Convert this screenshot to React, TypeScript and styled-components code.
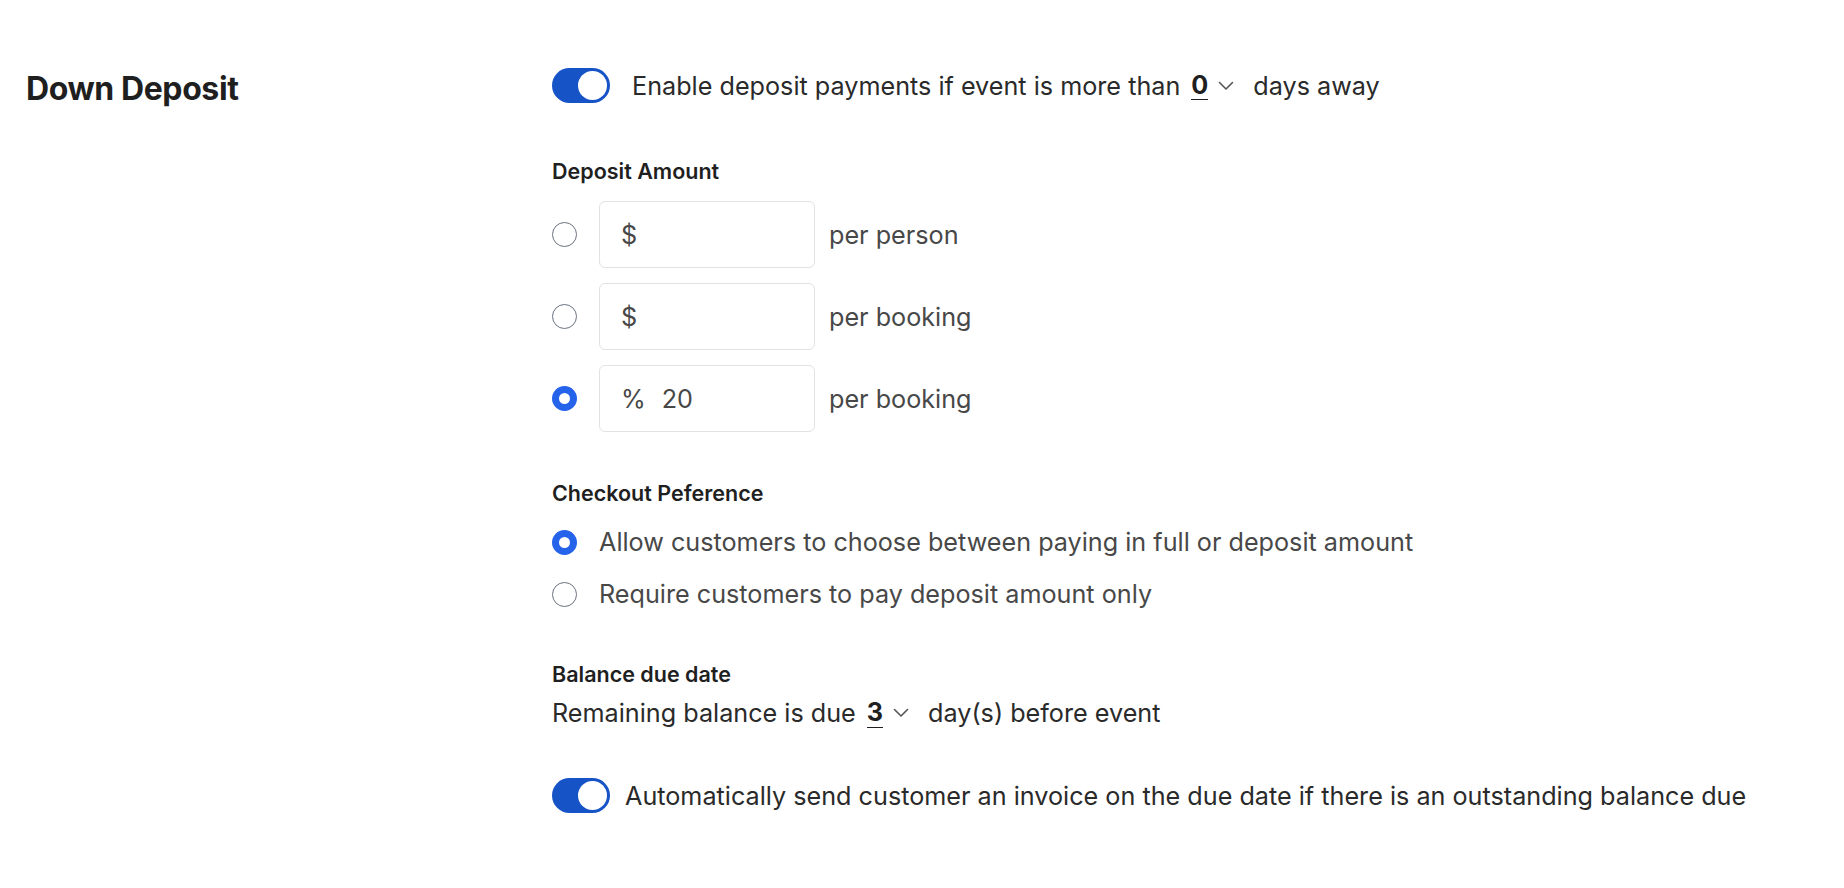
import React from 'react';
import styled, { createGlobalStyle } from 'styled-components';

const COLORS = {
  heading: '#1f1f1f',
  text: '#2a2a2a',
  muted: '#484848',
  toggle: '#1653c6',
  radio: '#2563eb',
  radioBorder: '#6b7280',
  inputBorder: '#e2e2e5',
};

const BODY_SIZE = 25.2;

const GlobalStyle = createGlobalStyle`
  html, body {
    margin: 0;
    padding: 0;
    background: #ffffff;
  }
  body {
    font-family: 'Inter', 'Noto Sans', sans-serif;
    color: ${COLORS.text};
    -webkit-font-smoothing: antialiased;
  }
`;

const Page = styled.div`
  display: grid;
  grid-template-columns: 526px 1fr;
  padding: 68px 0 0 26px;
`;

const SectionTitle = styled.h2`
  margin: 2px 0 0;
  font-size: 32px;
  line-height: 38px;
  font-weight: 700;
  letter-spacing: -0.4px;
  color: ${COLORS.heading};
`;

const Content = styled.div`
  display: flex;
  flex-direction: column;
`;

const ToggleRow = styled.div<{ $gap: number; $top?: number }>`
  display: flex;
  align-items: center;
  gap: ${(p) => p.$gap}px;
  margin-top: ${(p) => p.$top ?? 0}px;
  font-size: ${BODY_SIZE}px;
  color: ${COLORS.text};
`;

const ToggleTrack = styled.span`
  position: relative;
  display: inline-block;
  flex-shrink: 0;
  width: 58px;
  height: 35px;
  border-radius: 18px;
  background: ${COLORS.toggle};
`;

const ToggleKnob = styled.span`
  position: absolute;
  top: 3px;
  right: 3px;
  width: 29px;
  height: 29px;
  border-radius: 50%;
  background: #ffffff;
`;

const Sentence = styled.span`
  display: inline-flex;
  align-items: center;
`;

const InlineSelect = styled.span`
  display: inline-flex;
  align-items: center;
  gap: 10px;
  margin: 0 19px 0 11px;
`;

const SelectValue = styled.span`
  font-weight: 700;
  color: ${COLORS.heading};
  border-bottom: 1.5px solid ${COLORS.heading};
  line-height: 1.15;
`;

const FieldLabel = styled.div<{ $top: number }>`
  margin-top: ${(p) => p.$top}px;
  font-size: 21.5px;
  font-weight: 600;
  color: ${COLORS.heading};
`;

const AmountList = styled.div`
  display: flex;
  flex-direction: column;
  gap: 15px;
  margin-top: 17px;
`;

const AmountRow = styled.div`
  display: flex;
  align-items: center;
`;

const Radio = styled.span<{ $checked?: boolean }>`
  display: inline-block;
  flex-shrink: 0;
  box-sizing: border-box;
  width: 25px;
  height: 25px;
  border-radius: 50%;
  background: #ffffff;
  border: ${(p) => (p.$checked ? `7.5px solid ${COLORS.radio}` : `1.5px solid ${COLORS.radioBorder}`)};
`;

const AmountInput = styled.div`
  box-sizing: border-box;
  display: flex;
  align-items: center;
  gap: 16px;
  width: 216px;
  height: 67px;
  margin-left: 22px;
  padding: 0 21px;
  border: 1.5px solid ${COLORS.inputBorder};
  border-radius: 6px;
  font-size: ${BODY_SIZE}px;
  color: ${COLORS.muted};
`;

const Unit = styled.span`
  font-size: ${BODY_SIZE}px;
  color: ${COLORS.muted};
  margin-left: 14px;
`;

const OptionList = styled.div`
  display: flex;
  flex-direction: column;
  gap: 22px;
  margin-top: 21px;
`;

const OptionRow = styled.div`
  display: flex;
  align-items: center;
  gap: 22px;
  font-size: ${BODY_SIZE}px;
  color: ${COLORS.muted};
`;

const DueLine = styled.div`
  display: flex;
  align-items: center;
  margin-top: 11px;
  font-size: ${BODY_SIZE}px;
  color: ${COLORS.text};
`;

const Chevron = () => (
  <svg width="16" height="10" viewBox="0 0 16 10" fill="none">
    <path d="M1.5 1.5 L8 8 L14.5 1.5" stroke="#555" strokeWidth="1.6" strokeLinecap="round" strokeLinejoin="round" />
  </svg>
);

const Toggle = () => (
  <ToggleTrack>
    <ToggleKnob />
  </ToggleTrack>
);

const amounts = [
  { symbol: '$', value: '', unit: 'per person', checked: false },
  { symbol: '$', value: '', unit: 'per booking', checked: false },
  { symbol: '%', value: '20', unit: 'per booking', checked: true },
];

export default function App() {
  return (
    <>
      <GlobalStyle />
      <Page>
        <SectionTitle>Down Deposit</SectionTitle>
        <Content>
          <ToggleRow $gap={22}>
            <Toggle />
            <Sentence>
              Enable deposit payments if event is more than
              <InlineSelect>
                <SelectValue>0</SelectValue>
                <Chevron />
              </InlineSelect>
              days away
            </Sentence>
          </ToggleRow>

          <FieldLabel $top={55}>Deposit Amount</FieldLabel>
          <AmountList>
            {amounts.map((a, i) => (
              <AmountRow key={i}>
                <Radio $checked={a.checked} />
                <AmountInput>
                  <span>{a.symbol}</span>
                  {a.value && <span>{a.value}</span>}
                </AmountInput>
                <Unit>{a.unit}</Unit>
              </AmountRow>
            ))}
          </AmountList>

          <FieldLabel $top={48}>Checkout Peference</FieldLabel>
          <OptionList>
            <OptionRow>
              <Radio $checked />
              <span>Allow customers to choose between paying in full or deposit amount</span>
            </OptionRow>
            <OptionRow>
              <Radio />
              <span>Require customers to pay deposit amount only</span>
            </OptionRow>
          </OptionList>

          <FieldLabel $top={52}>Balance due date</FieldLabel>
          <DueLine>
            Remaining balance is due
            <InlineSelect>
              <SelectValue>3</SelectValue>
              <Chevron />
            </InlineSelect>
            day(s) before event
          </DueLine>

          <ToggleRow $gap={15} $top={50}>
            <Toggle />
            <span>Automatically send customer an invoice on the due date if there is an outstanding balance due</span>
          </ToggleRow>
        </Content>
      </Page>
    </>
  );
}
